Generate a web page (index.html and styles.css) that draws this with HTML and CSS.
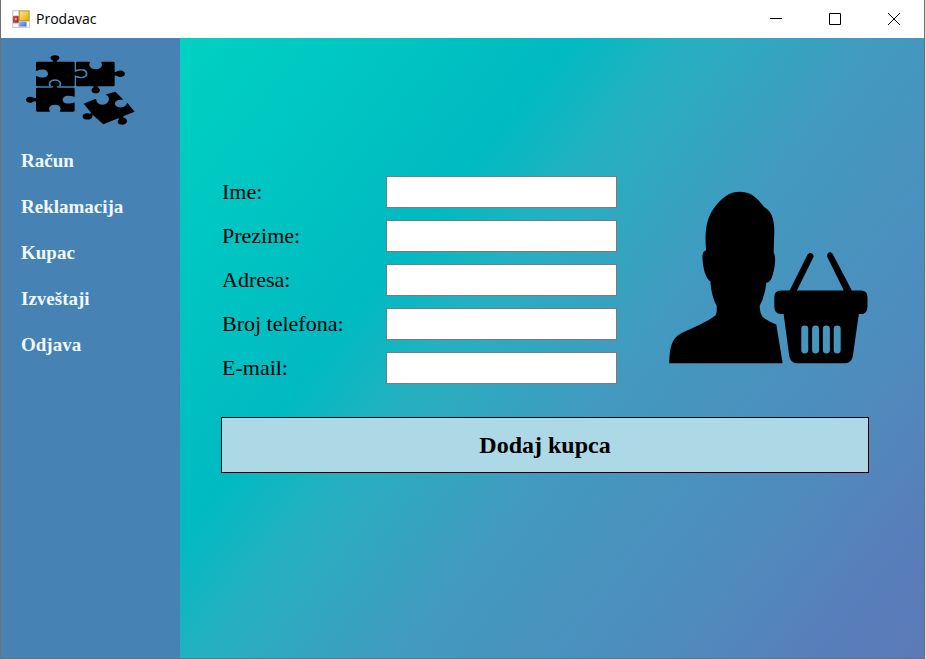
FILE: index.html
```html
<!DOCTYPE html>
<html lang="sr-Latn">
<head>
<meta charset="utf-8">
<title>Prodavac</title>
<link rel="stylesheet" href="styles.css">
</head>
<body>
<div class="window">
  <header class="titlebar">
    <svg class="app-icon" viewBox="0 0 54 54" aria-hidden="true">
      <defs>
        <linearGradient id="gold" x1="0" y1="0" x2="1" y2="1"><stop offset="0" stop-color="#ffe98a"/><stop offset="1" stop-color="#e3a800"/></linearGradient>
        <linearGradient id="red" x1="0" y1="0" x2="1" y2="1"><stop offset="0" stop-color="#d8564a"/><stop offset="1" stop-color="#a81c14"/></linearGradient>
        <linearGradient id="blue" x1="0" y1="0" x2="1" y2="1"><stop offset="0" stop-color="#8fb8ff"/><stop offset="1" stop-color="#3a6fdc"/></linearGradient>
      </defs>
      <rect width="54" height="54" rx="3" fill="#cfcfcf"/>
      <path d="M4 4h14v12H4zM4 42h14v8H4zM45 36h6v14h-6z" fill="#fff"/>
      <rect x="22" y="3" width="29" height="29" fill="url(#gold)" stroke="#b98a10" stroke-width="2"/>
      <rect x="3" y="18" width="17" height="20" fill="url(#red)"/>
      <rect x="9" y="24" width="5" height="7" fill="#e7a29c"/>
      <rect x="22" y="35" width="21" height="14" fill="url(#blue)"/>
    </svg>
    <h1 class="caption">Prodavac</h1>
    <div class="window-buttons">
      <button type="button" class="window-button" aria-label="Minimize"><svg viewBox="0 0 12 12" aria-hidden="true"><path d="M0 5.5h12"/></svg></button>
      <button type="button" class="window-button" aria-label="Maximize"><svg viewBox="0 0 12 12" aria-hidden="true"><path d="M.5.5h11v11H.5z"/></svg></button>
      <button type="button" class="window-button" aria-label="Close"><svg viewBox="0 0 12 12" aria-hidden="true"><path d="M0 0l12 12M12 0L0 12"/></svg></button>
    </div>
  </header>
  <div class="body">
    <aside class="sidebar">
      <svg class="logo" viewBox="75 162 330 213" aria-hidden="true">
        <path d="M112 185H157C161 185 160 182 156 180C148 176 151 166 165 166C179 166 182 176 174 180C170 182 169 185 173 185H220Q224 185 224 189V255Q224 259 220 259H112Q108 259 108 255V230C108 226 112 229 116 231C130 235 144 231 144 221C144 210 130 206 116 210C112 212 108 215 108 211V189Q108 185 112 185Z"/>
        <path d="M232 185H267C273 185 267 191 268 196C270 204 277 208 287 208C297 208 304 204 306 196C307 191 301 185 307 185H340Q344 185 344 189V213C344 217 348 216 351 214C361 208 375 213 375 221C375 229 361 234 351 228C348 226 344 225 344 229V255Q344 259 340 259H296C291 259 292 261 296 264C303 269 300 280 287 280C274 280 271 269 278 264C282 261 283 259 278 259H232Q228 259 228 255V189Q228 185 232 185Z"/>
        <path d="M112 263H220Q224 263 224 267V289C224 292 220 290 217 289C203 284 188 289 188 299C188 310 203 313 217 309C220 308 224 306 224 309V331Q224 335 220 335H181C177 335 182 329 182 325C180 317 174 314 165 314C156 314 149 317 147 325C147 329 152 335 148 335H112Q108 335 108 331V307C108 303 104 304 101 305C91 311 78 307 78 299C78 291 91 287 101 293C104 295 108 296 108 292V267Q108 263 112 263Z"/>
        <path class="groove" d="M151 259C145 249 151 240 165 240C179 240 185 249 179 259M228 212C246 207 259 210 260 221C259 232 246 235 228 230"/>
        <path d="M157 264C162 258 161 256 156 253C150 246 156 243 165 243C174 243 180 246 174 253C169 256 168 258 173 264ZM222 212C226 219 230 216 234 214C245 209 256 213 256 221C256 229 245 233 234 228C230 226 226 223 222 230Z"/>
        <path d="M251 311L285 297C291 295 288 302 291 306C297 315 309 316 318 311C328 306 329 297 324 289C321 284 313 287 319 283L346 275L368 297C371 301 360 298 353 301C343 306 343 313 349 319C358 325 373 322 379 314C382 310 379 306 383 310L404 335L373 347C366 350 370 352 376 355C386 363 380 374 367 374C353 374 350 365 356 359C359 355 354 355 349 357L310 373L281 347C276 344 277 349 276 353C271 361 250 361 248 351C246 341 260 338 268 341C273 342 274 338 271 335Z"/>
      </svg>
      <nav class="menu">
        <a href="#racun">Račun</a>
        <a href="#reklamacija">Reklamacija</a>
        <a href="#kupac">Kupac</a>
        <a href="#izvestaji">Izveštaji</a>
        <a href="#odjava">Odjava</a>
      </nav>
    </aside>
    <main class="content">
      <form class="customer">
        <div class="details">
          <div class="fields">
            <label for="ime">Ime:</label><input id="ime" type="text">
            <label for="prezime">Prezime:</label><input id="prezime" type="text">
            <label for="adresa">Adresa:</label><input id="adresa" type="text">
            <label for="telefon">Broj telefona:</label><input id="telefon" type="tel">
            <label for="email">E-mail:</label><input id="email" type="email">
          </div>
          <svg class="picture" viewBox="24 33 600 520" aria-hidden="true">
            <path d="M27 551C28 500 36 475 62 461C92 448 145 424 165 408C171 400 170 390 170 379C158 357 153 333 151 305C136 296 127 259 127 232C127 220 130 213 138 212C132 149 142 114 159 88C184 53 207 35 240 35C276 36 294 56 312 81C332 91 343 114 343 153L341 217C349 233 345 260 339 282C334 300 329 308 319 309C315 339 310 357 299 378C300 392 301 402 308 412C321 422 334 429 349 434L368 551Z"/>
            <path d="M389 332L443 224C448 215 462 219 461 231L411 332H552L503 233C498 220 511 211 519 223L576 332H604Q623 332 623 352V380Q623 403 603 403H597L579 530Q575 551 556 551H408Q392 549 388 530L371 403H363Q343 402 343 380V352Q343 332 362 332Z"/>
            <path class="slots" d="M434.500 448V511M467 448V511M499.500 448V511M532 448V511"/>
          </svg>
        </div>
        <button type="submit" class="submit">Dodaj kupca</button>
      </form>
    </main>
  </div>
</div>
</body>
</html>
```
FILE: styles.css
```css
* {
  box-sizing: border-box;
}

body {
  margin: 0;
  background: #dcdcdc;
  font-family: "Liberation Serif", "Times New Roman", serif;
}

.window {
  display: flex;
  flex-direction: column;
  min-height: 100vh;
  margin-right: 1px;
  border: solid #707070;
  border-width: 0 1px 1px;
}

.titlebar {
  display: flex;
  align-items: center;
  height: 38px;
  padding: 0 1px 0 11px;
  background: #fff;
}

.app-icon {
  width: 18px;
  height: 18px;
}

.caption {
  margin: 0 auto 0 6px;
  padding-bottom: 2px;
  font: 14px "Open Sans", "Segoe UI", sans-serif;
  color: #000;
}

.window-buttons {
  display: flex;
}

.window-button {
  display: grid;
  place-items: center;
  width: 59px;
  height: 38px;
  padding: 0;
  border: 0;
  background: none;
}

.window-button svg {
  width: 12px;
  height: 12px;
  fill: none;
  stroke: #000;
}

.body {
  display: flex;
  flex: 1;
}

.sidebar {
  flex: none;
  width: 179px;
  padding: 16px 20px;
  background: #4682b4;
}

.logo {
  display: block;
  width: 110px;
  height: 71px;
  margin-left: 4px;
}

.groove {
  fill: none;
  stroke: #4682b4;
  stroke-width: 5;
}

.menu {
  display: flex;
  flex-direction: column;
  gap: 24px;
  margin-top: 25px;
}

.menu a {
  color: #f0f8ff;
  font-size: 19px;
  font-weight: bold;
  line-height: 22px;
  text-decoration: none;
}

.content {
  flex: 1;
  padding: 138px 55px 40px 41px;
  background: linear-gradient(128deg, #00d1c2 0%, #00bac2 32%, #10b6c2 36%, #25b0c1 41%, #429ac0 57%, #4f8bbd 79%, #5780bb 89%, #5c79b8 100%);
}

.customer {
  display: grid;
  gap: 33px;
}

.details {
  display: flex;
  justify-content: space-between;
}

.fields {
  display: grid;
  grid-template-columns: 164px 231px;
  row-gap: 12px;
  align-items: center;
  padding-left: 1px;
}

.fields label {
  font-size: 22px;
  line-height: 32px;
}

.fields input {
  width: 100%;
  height: 32px;
  padding: 4px;
  border: 1px solid #7a7a7a;
  background: #fff;
  font: inherit;
  font-size: 22px;
}

.picture {
  width: 200px;
  height: 173px;
  margin: 15px 1px 0 0;
}

.slots {
  fill: none;
  stroke: #4795bf;
  stroke-width: 21;
  stroke-linecap: round;
}

.submit {
  height: 56px;
  border: 1px solid #000;
  background: #add8e6;
  color: #000;
  font: bold 24px "Liberation Serif", "Times New Roman", serif;
}
```
